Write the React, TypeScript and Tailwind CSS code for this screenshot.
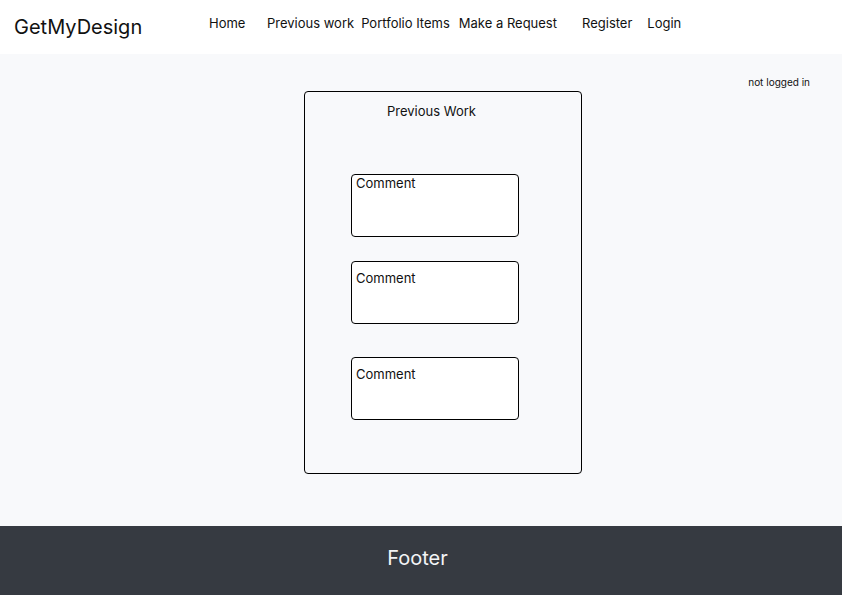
export default function App() {
  const font = { fontFamily: 'Inter, "Noto Sans", sans-serif' };
  return (
    <div className="flex h-[595px] w-[842px] flex-col bg-[#f8f9fb] text-[#111]" style={font}>
      <header className="flex h-[54px] items-center bg-white">
        <div className="ml-[14px] w-[195px] text-[20px] leading-none">GetMyDesign</div>
        <nav className="-mt-[6px] flex items-center text-[13px]">
          <a className="mr-[21.5px]">Home</a>
          <a className="mr-[7px]">Previous work</a>
          <a className="mr-[9px]">Portfolio Items</a>
          <a className="mr-[25px]">Make a Request</a>
          <a className="mr-[15px]">Register</a>
          <a>Login</a>
        </nav>
      </header>

      <main className="flex flex-1 items-start">
        <section className="ml-[304px] mt-[37px] flex h-[383px] w-[278px] flex-col rounded-[4px] border border-black">
          <h2 className="ml-[82px] mt-[11px] text-[13px] leading-4">Previous Work</h2>
          <div className="ml-[46px] mt-[55px] flex flex-col">
            <Comment top="pt-0" />
            <div className="mt-[24px]">
              <Comment top="pt-[8px]" />
            </div>
            <div className="mt-[33px]">
              <Comment top="pt-[8px]" />
            </div>
          </div>
        </section>
        <div className="ml-auto mr-[32px] mt-[22px] text-[10px] leading-3">not logged in</div>
      </main>

      <footer className="flex h-[69px] items-center justify-center bg-[#363a41] pb-[6px] pr-[7px] text-[20px] text-[#f3f4f6]">
        Footer
      </footer>
    </div>
  );
}

function Comment({ top }: { top: string }) {
  return (
    <div className={`h-[63px] w-[168px] rounded-[4px] border border-black bg-white px-[4px] text-[13px] leading-4 ${top}`}>
      Comment
    </div>
  );
}
